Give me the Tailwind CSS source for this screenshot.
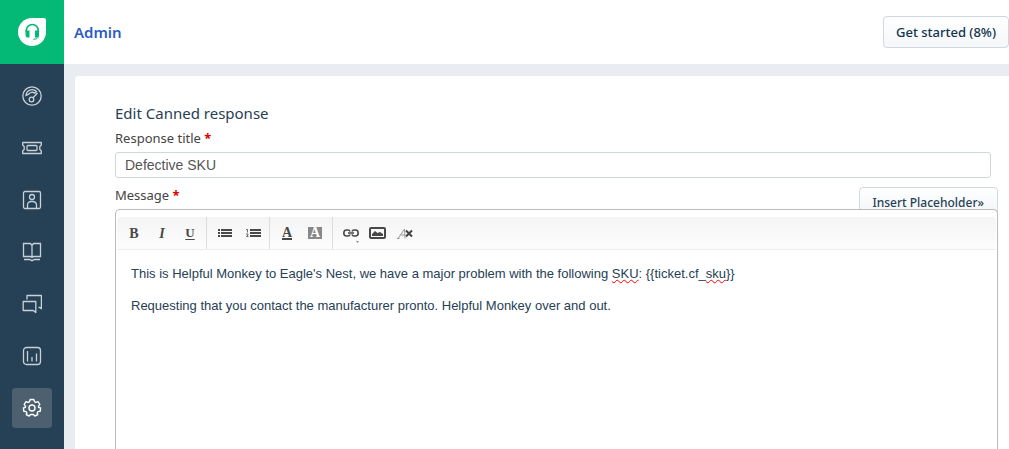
<!DOCTYPE html>
<html lang="en">
<head>
    <meta charset="UTF-8">
    <meta name="viewport" content="width=device-width, initial-scale=1.0">
    <title>Admin - Edit Canned response</title>
    <script src="https://cdn.jsdelivr.net/npm/@tailwindcss/browser@4"></script>
</head>
<body class="flex h-screen overflow-hidden bg-[#e9edf2] font-['Noto_Sans','Open_Sans',sans-serif] text-[#264055]">
    <!-- Sidebar -->
    <nav class="flex w-16 shrink-0 flex-col bg-[#264155]" aria-label="Main">
        <a href="#" aria-label="Home" class="flex h-16 shrink-0 items-center justify-center bg-[#04b876]">
            <svg class="size-7" viewBox="0 0 28 28" fill="none">
                <path d="M14 0h12a2 2 0 0 1 2 2v12A14 14 0 1 1 14 0z" fill="#fff"/>
                <path d="M8.300 14v-1.500a6 6 0 0 1 12 0V14" stroke="#04b876" stroke-width="1.700"/>
                <path d="M7.500 12.500h4v7h-1.500a2.500 2.500 0 0 1-2.500-2.500zM17 12.500h4v4.500a2.500 2.500 0 0 1-2.500 2.500H17z" fill="#04b876"/>
                <path d="M20.300 17.500c0 2.800-1.500 3.800-5 3.800" stroke="#04b876"/>
            </svg>
        </a>
        <div class="flex flex-col items-center gap-3 pt-3 text-[#c9d1d8]">
            <a href="#" aria-label="Dashboard" class="flex size-10 items-center justify-center rounded">
                <svg class="size-5" viewBox="0 0 20 20" fill="none" stroke="currentColor" stroke-width="1.300">
                    <circle cx="10" cy="10" r="9.200"/>
                    <path d="M4 9.500a6.200 6.200 0 0 1 10.500-4l-1.500 1.700a4.300 4.300 0 0 0-6.300 1z"/>
                    <circle cx="9.500" cy="13.500" r="2.300"/>
                    <path d="M11 11.700l4.500-4.700"/>
                </svg>
            </a>
            <a href="#" aria-label="Tickets" class="flex size-10 items-center justify-center rounded">
                <svg class="size-5" viewBox="0 0 20 20" fill="none" stroke="currentColor" stroke-width="1.300">
                    <path d="M.7 4.500h18.600v2.500l-1.500 1.500v3l1.500 1.500v2.500H.7V13l1.500-1.500v-3L.7 7z" stroke-linejoin="round"/>
                    <rect x="5" y="7.500" width="10" height="5" rx="1"/>
                </svg>
            </a>
            <a href="#" aria-label="Contacts" class="flex size-10 items-center justify-center rounded">
                <svg class="size-5" viewBox="0 0 20 20" fill="none" stroke="currentColor" stroke-width="1.300">
                    <rect x="1.500" y="1.500" width="17" height="17" rx="1.500"/>
                    <circle cx="10" cy="7" r="2.500"/>
                    <path d="M5.500 18.500V15a3.500 3.500 0 0 1 3.500-3.500h2a3.500 3.500 0 0 1 3.500 3.500v3.500"/>
                </svg>
            </a>
            <a href="#" aria-label="Solutions" class="flex size-10 items-center justify-center rounded">
                <svg class="size-5" viewBox="0 0 20 20" fill="none" stroke="currentColor" stroke-width="1.300">
                    <path d="M10 3.500L8.500 1.500h-7v13h7l1.500 1 1.500-1h7v-13h-7zM10 3v12.500"/>
                    <path d="M2 17.500h5.500l2.500 1.200 2.500-1.200H18"/>
                </svg>
            </a>
            <a href="#" aria-label="Forums" class="flex size-10 items-center justify-center rounded">
                <svg class="size-5" viewBox="0 0 20 20" fill="none" stroke="currentColor" stroke-width="1.300" stroke-linejoin="round">
                    <path d="M5 5.500V1.500h14.400v13.300l-1.400-1.300h-1.500"/>
                    <path d="M1.200 7.500h12.600v11l-2.500-2H1.200z"/>
                </svg>
            </a>
            <a href="#" aria-label="Reports" class="flex size-10 items-center justify-center rounded">
                <svg class="size-5" viewBox="0 0 20 20" fill="none" stroke="currentColor" stroke-width="1.300">
                    <rect x="1.500" y="1.500" width="17" height="17" rx="3"/>
                    <path d="M5.500 5v10.500M10 11v4.500M14.500 7.500v8"/>
                </svg>
            </a>
            <a href="#" aria-label="Admin" aria-current="page" class="flex size-10 items-center justify-center rounded bg-[#4c6070] text-white">
                <svg class="size-5" viewBox="0 0 20 20" fill="none" stroke="currentColor" stroke-width="1.400" stroke-linejoin="round">
                    <path d="M7.500 3.600L8.200 1.500h3.600l.7 2.100 1.300.8 2.200-.7 1.800 2.700-1.300 1.900.1 1.100 2 .6-.4 3.200-2.200.4-.8 1 .5 2-2.800 1.400-1.500-1.500H8.600L7.100 18l-2.800-1.400.5-2-.8-1-2.200-.4-.4-3.200 2-.6.1-1.100-1.300-1.900L4 3.700l2.200.7z"/>
                    <circle cx="10" cy="10" r="3"/>
                </svg>
            </a>
        </div>
    </nav>

    <div class="flex min-w-0 grow flex-col">
        <header class="flex h-16 shrink-0 items-center justify-between bg-white pl-[10px]">
            <h1 class="text-[15px] font-semibold text-[#2c5cc5]">Admin</h1>
            <button type="button" class="h-8 rounded border border-[#cfd7df] bg-linear-to-b from-white to-[#f5f7f9] px-3 pt-[2px] text-[13px] font-medium whitespace-nowrap text-[#12344d]">Get started (8%)</button>
        </header>

        <main class="mt-3 ml-[11px] flex grow flex-col rounded-tl bg-white pt-[25px] pr-[11px] pl-10">
            <h2 class="text-[15px] leading-6">Edit Canned response</h2>
            <form class="flex grow flex-col">
                <label for="title" class="mb-px text-[13px] leading-[26px] text-[#444]">Response title <b class="text-[#e00000]">*</b></label>
                <input id="title" type="text" value="Defective SKU" class="mr-[7px] h-[26px] rounded-[3px] border border-[#cfd7d7] px-[9px] font-['Liberation_Sans',Arial,sans-serif] text-[14px] text-[#555]">

                <div class="mt-1 flex h-[27px] items-start justify-between">
                    <span id="message-label" class="text-[13px] leading-[26px] text-[#444]">Message <b class="text-[#e00000]">*</b></span>
                    <button type="button" class="mt-[5px] h-8 shrink-0 rounded border border-[#d3dadf] bg-linear-to-b from-white to-[#f0f3f7] px-[13px] text-[12px] font-medium">Insert Placeholder»</button>
                </div>

                <!-- Editor -->
                <div class="relative flex grow flex-col rounded-t-[5px] border border-b-0 border-[#bbb] bg-white px-px pt-[7px]">
                    <div role="toolbar" aria-label="Formatting" class="flex h-[33px] shrink-0 rounded-t border-b border-[#eee] bg-linear-to-b from-[#f4f4f4] to-[#fdfdfd] font-['Liberation_Serif',serif] text-[14px] font-bold text-[#484848]">
                        <div class="flex border-r border-[#ddd] pr-[2px] pl-[3px]">
                            <button type="button" class="w-7">B</button>
                            <button type="button" class="w-7 italic">I</button>
                            <button type="button" class="w-7 text-[13px] underline underline-offset-2">U</button>
                        </div>
                        <div class="flex border-r border-[#ddd] pr-[2px] pl-1">
                            <button type="button" aria-label="Bullet list" class="flex w-7 items-center justify-center">
                                <svg class="h-[8px] w-[14px]" viewBox="0 0 14 8" fill="currentColor">
                                    <path d="M0 0h2v2H0zM3 0h11v2H3zM0 3h2v2H0zM3 3h11v2H3zM0 6h2v2H0zM3 6h11v2H3z"/>
                                </svg>
                            </button>
                            <button type="button" aria-label="Numbered list" class="flex w-7 items-center justify-center">
                                <svg class="h-[8px] w-[15px]" viewBox="0 0 15 8" fill="currentColor">
                                    <path d="M4 0h11v2H4zM4 3h11v2H4zM4 6h11v2H4z"/>
                                    <path d="M0 .5h1.500v3M0 5h2v1L.5 7.500h2" fill="none" stroke="currentColor" stroke-width=".8"/>
                                </svg>
                            </button>
                        </div>
                        <div class="flex border-r border-[#ddd] px-[3px]">
                            <button type="button" aria-label="Text colour" class="flex w-7 items-center justify-center">
                                <span class="border-b-2 border-current leading-[11px]">A</span>
                            </button>
                            <button type="button" aria-label="Background colour" class="flex w-7 items-center justify-center">
                                <span class="w-[14px] bg-[#888] leading-[12px] text-white">A</span>
                            </button>
                        </div>
                        <div class="flex px-1">
                            <button type="button" aria-label="Insert link" class="relative flex w-[27px] items-center justify-center">
                                <svg class="h-2 w-4" viewBox="0 0 16 8" fill="none" stroke="currentColor" stroke-width="1.600">
                                    <path d="M7 2.500Q6.500 1 5 1H3.500a2.500 2.800 0 0 0 0 6H5Q6.500 7 7 5.500M9 2.500Q9.500 1 11 1h1.500a2.500 2.800 0 0 1 0 6H11Q9.500 7 9 5.500M5 4h6"/>
                                </svg>
                                <svg class="absolute right-[5px] bottom-[6px] h-[2px] w-[3px]" viewBox="0 0 3 2" fill="#888"><path d="M0 0h3L1.500 2z"/></svg>
                            </button>
                            <button type="button" aria-label="Insert image" class="flex w-[27px] items-center justify-center">
                                <svg class="h-3 w-[17px]" viewBox="0 0 17 12">
                                    <rect x="1" y="1" width="15" height="10" rx="1" fill="none" stroke="currentColor" stroke-width="2"/>
                                    <path d="M3 9V7l3-3 2.500 2L11 5l3 2v2z" fill="currentColor"/>
                                </svg>
                            </button>
                            <button type="button" aria-label="Remove formatting" class="flex w-[27px] items-center justify-center">
                                <svg class="h-[11px] w-[16px]" viewBox="0 0 16 11" fill="none">
                                    <path d="M1 10.500L7.500 1l.5 9.500M4 7h4M0 10.500h2.500" stroke="#999"/>
                                    <path d="M9 2.500l6 6M15 2.500l-6 6" stroke="#444" stroke-width="2"/>
                                </svg>
                            </button>
                        </div>
                    </div>
                    <div contenteditable="true" role="textbox" aria-multiline="true" aria-labelledby="message-label" spellcheck="false" class="grow space-y-4 px-[14px] py-4 font-['Liberation_Sans',Arial,sans-serif] text-[13px] leading-4 outline-none">
                        <p>This is Helpful Monkey to Eagle's Nest, we have a major problem with the following <span class="underline decoration-[#ff0000] decoration-wavy decoration-1 underline-offset-1">SKU</span>: {{ticket.cf_<span class="underline decoration-[#ff0000] decoration-wavy decoration-1 underline-offset-1">sku</span>}}</p>
                        <p>Requesting that you contact the manufacturer pronto. Helpful Monkey over and out.</p>
                    </div>
                </div>
            </form>
        </main>
    </div>
</body>
</html>
